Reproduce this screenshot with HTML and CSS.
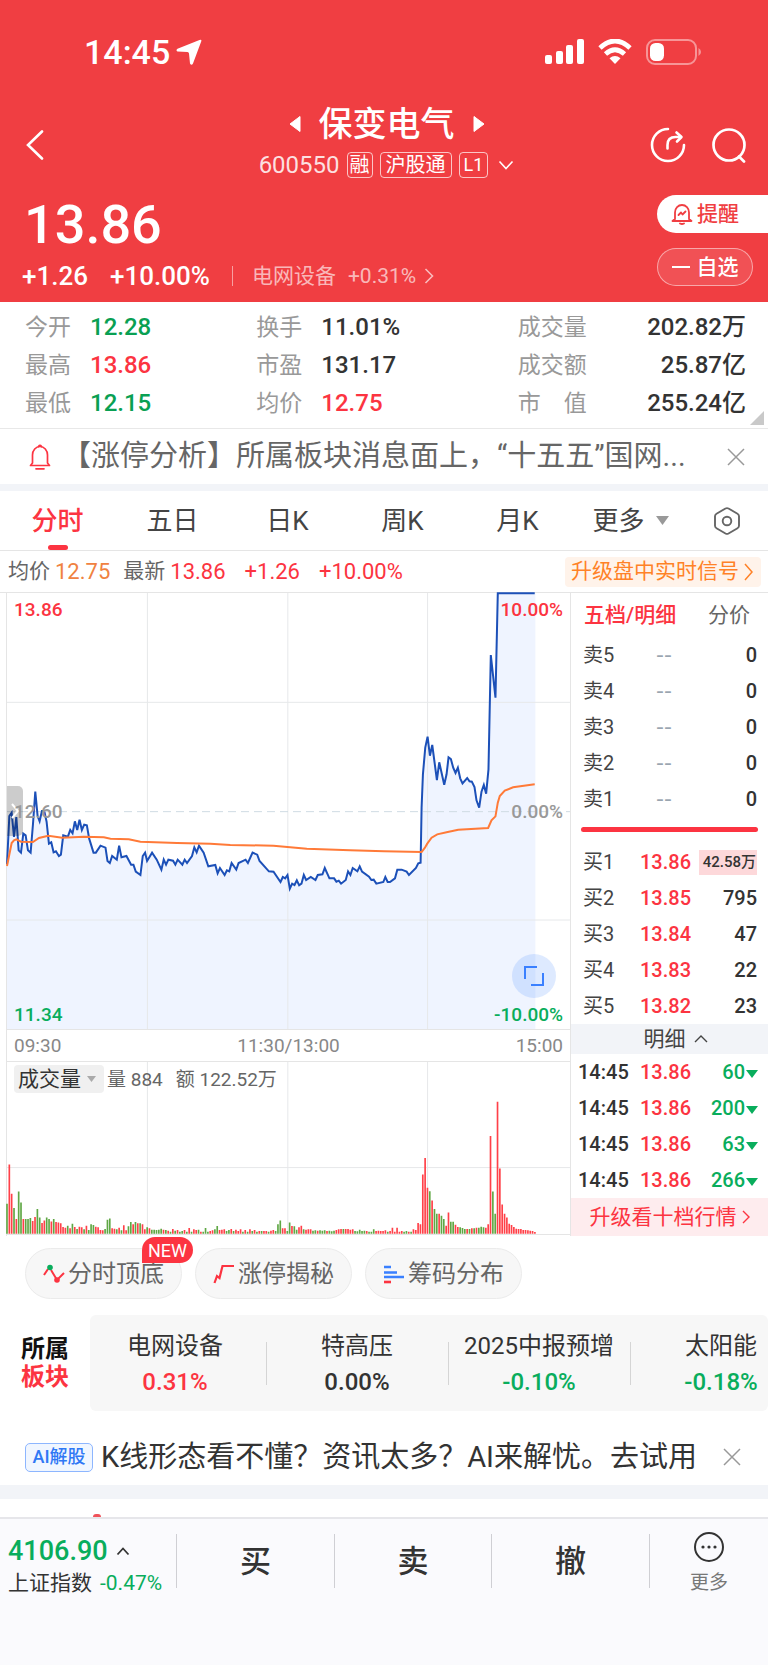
FILE: index.html
```html
<!DOCTYPE html>
<html lang="zh-CN">
<head>
<meta charset="utf-8">
<meta name="viewport" content="width=device-width, initial-scale=1">
<title>保变电气 600550</title>
<link rel="stylesheet" href="styles.css">
</head>
<body>
<header class="hero">
  <div class="status">
    <div class="status-time">14:45
      <svg width="26" height="26" viewBox="0 0 26 26"><path d="M23.500 1Q26 0 25.200 2.500L17 24.500Q15.500 27 14 24.500L13 14.500Q12.800 13.300 11.500 13.100L1.500 12.500Q-.500 11.200 1.500 9.800Z" fill="#fff"/></svg>
    </div>
    <div class="status-icons">
      <svg width="39" height="26" viewBox="0 0 39 26" fill="#fff"><rect x="0" y="16" width="7" height="9" rx="2"/><rect x="11" y="12" width="7" height="13" rx="2"/><rect x="21" y="6" width="7" height="19" rx="2"/><rect x="32" y="0" width="7" height="25" rx="2"/></svg>
      <svg width="34" height="26" viewBox="0 0 34 26" fill="none" stroke="#fff" stroke-width="4.800"><path d="M2 9Q17-5 32 9"/><path d="M7.500 15Q17 6.500 26.500 15"/><path d="M17 25L11.500 19.200Q17 14.800 22.500 19.200Z" fill="#fff" stroke="none"/></svg>
      <svg width="56" height="26" viewBox="0 0 56 26"><rect x="1" y="1" width="49" height="24" rx="8" fill="none" stroke="#fff" stroke-opacity=".45" stroke-width="2"/><rect x="4" y="4" width="14" height="18" rx="5.500" fill="#fff"/><path d="M52.500 9Q55 10.500 55 13T52.500 17Z" fill="#fff" fill-opacity=".45"/></svg>
    </div>
  </div>
  <div class="titlebar">
    <button class="icon-btn back" aria-label="返回"><svg width="18" height="30" viewBox="0 0 18 30"><path d="M16 1.500L2 15L16 28.500" fill="none" stroke="#fff" stroke-width="2.600" stroke-linecap="round"/></svg></button>
    <div class="title-center">
      <div class="title-row">
        <button class="icon-btn" aria-label="上一只"><svg width="12" height="18" viewBox="0 0 12 18"><path d="M11 1.500V16.500L1 9Z" fill="#fff" stroke="#fff" stroke-linejoin="round"/></svg></button>
        <h1>保变电气</h1>
        <button class="icon-btn" aria-label="下一只"><svg width="12" height="18" viewBox="0 0 12 18"><path d="M1 1.500V16.500L11 9Z" fill="#fff" stroke="#fff" stroke-linejoin="round"/></svg></button>
      </div>
      <div class="code-row">
        <span class="code">600550</span><span class="tag">融</span><span class="tag wide">沪股通</span><span class="tag l1">L1</span>
        <svg width="16" height="10" viewBox="0 0 16 10"><path d="M1.500 1.500L8 8.500L14.500 1.500" fill="none" stroke="#fff" stroke-width="1.600"/></svg>
      </div>
    </div>
    <div class="title-actions">
      <button class="icon-btn" aria-label="分享"><svg width="36" height="36" viewBox="0 0 36 36" fill="none" stroke="#fff" stroke-width="2.600" stroke-linecap="round" stroke-linejoin="round"><path d="M18 2A16 16 0 1 0 34 18"/><path d="M17.500 21.500V18Q17.500 10 25.500 10H30.500"/><path d="M26.500 5.500L31.500 10L27 14.500"/></svg></button>
      <button class="icon-btn" aria-label="搜索"><svg width="36" height="36" viewBox="0 0 36 36" fill="none" stroke="#fff" stroke-width="2.700" stroke-linecap="round"><circle cx="18" cy="18" r="15.500"/><path d="M28 29.500L33 34.500"/></svg></button>
    </div>
  </div>
  <div class="quote">
    <div class="quote-main">
      <div class="price">13.86</div>
      <div class="change-row">
        <span class="chg">+1.26</span><span class="chg pct">+10.00%</span>
        <a class="sector-link" href="#">电网设备<span>+0.31%</span><svg width="10" height="16" viewBox="0 0 10 16"><path d="M1.500 1L8.500 8L1.500 15" fill="none" stroke="currentColor" stroke-width="1.600"/></svg></a>
      </div>
    </div>
    <div class="quote-actions">
      <button class="pill solid"><svg width="22" height="22" viewBox="0 0 22 22" fill="none" stroke="#f03e42" stroke-width="1.800" stroke-linejoin="round" stroke-linecap="round"><path d="M4 16V9.500A7 7.500 0 0 1 18 9.500V16L20.500 18H1.500Z"/><path d="M9 20.500Q11 21.500 13 20.500"/><path d="M7.500 12L10 9.500L11.500 11.500L14.500 8.500"/></svg>提醒</button>
      <button class="pill ghost"><svg width="18" height="2" viewBox="0 0 18 2"><path d="M0 1H18" stroke="#fff" stroke-width="2"/></svg>自选</button>
    </div>
  </div>
</header>

<main>
  <section class="stats">
    <dl><dt>今开</dt><dd class="down">12.28</dd><dt>最高</dt><dd class="up">13.86</dd><dt>最低</dt><dd class="down">12.15</dd></dl>
    <dl><dt>换手</dt><dd>11.01%</dd><dt>市盈</dt><dd>131.17</dd><dt>均价</dt><dd class="up">12.75</dd></dl>
    <dl class="right"><dt>成交量</dt><dd>202.82万</dd><dt>成交额</dt><dd>25.87亿</dd><dt>市　值</dt><dd>255.24亿</dd></dl>
    <svg class="corner" width="14" height="14" viewBox="0 0 14 14"><path d="M14 0V14H0Z" fill="#c9c9c9"/></svg>
  </section>

  <section class="news">
    <svg width="22" height="26" viewBox="0 0 22 26" fill="none" stroke="#fc3441" stroke-width="1.700" stroke-linejoin="round" stroke-linecap="round"><path d="M3.500 19V11A7.500 8.500 0 0 1 18.500 11V19L20.500 21.500H1.500Z"/><path d="M9.500 2.500Q11 .300 12.500 2.500M7 24.800H15"/></svg>
    <a class="news-text" href="#">【涨停分析】所属板块消息面上，“十五五”国网...</a>
    <button class="icon-btn" aria-label="关闭"><svg width="18" height="18" viewBox="0 0 18 18"><path d="M1 1L17 17M17 1L1 17" stroke="#999" stroke-width="1.500"/></svg></button>
  </section>

  <nav class="tabs">
    <button class="tab active">分时</button>
    <button class="tab">五日</button>
    <button class="tab">日K</button>
    <button class="tab">周K</button>
    <button class="tab">月K</button>
    <button class="tab">更多<svg width="13" height="9" viewBox="0 0 13 9"><path d="M0 0H13L6.500 9Z" fill="#999"/></svg></button>
    <button class="tab" aria-label="设置"><svg width="28" height="28" viewBox="0 0 28 28" fill="none" stroke="#666" stroke-width="1.900" stroke-linejoin="round"><path d="M12.500 1.500Q14 .700 15.500 1.500L24.500 6.800Q26 7.700 26 9.200V18.800Q26 20.300 24.500 21.200L15.500 26.500Q14 27.300 12.500 26.500L3.500 21.200Q2 20.300 2 18.800V9.200Q2 7.700 3.500 6.800Z"/><circle cx="14" cy="14" r="4.300"/></svg></button>
  </nav>

  <div class="info">
    <span class="lbl">均价</span><span class="avg">12.75</span>
    <span class="lbl second">最新</span><span class="up">13.86</span>
    <span class="up gap">+1.26</span><span class="up gap">+10.00%</span>
    <button class="signal">升级盘中实时信号<svg width="9" height="18" viewBox="0 0 9 18"><path d="M1 1L8 9L1 17" fill="none" stroke="currentColor" stroke-width="1.500"/></svg></button>
  </div>

  <section class="board">
    <div class="charts">
      <div class="chart-box price-chart">
        <svg class="plot" viewBox="19 36 1692 1308" preserveAspectRatio="none">
          <path class="area" d="M19 1344V850L26 705L33 695L40 768L47 708L54 808L61 815L68 758L75 763L82 808L90 815L97 730L104 632L111 705L117 721L124 690L131 690L138 722L145 788L152 784L159 814L166 811L175 825L181 821L188 763L202 767L209 747L216 757L223 721L230 747L237 716L244 747L251 731L259 733L266 773L279 815L286 815L300 794L315 800L321 840L328 846L335 825L349 836L356 794L363 829L378 825L392 851L399 851L406 872L420 882L427 825L434 815L440 840L455 815L469 836L483 866L490 836L497 851L504 836L518 839L525 851L532 836L546 851L553 836L560 846L575 825L582 799L589 814L596 794L610 815L624 856L645 852L652 877L659 861L673 882L680 868L687 871L694 846L708 866L715 846L736 836L743 846L757 815L771 821L778 840L806 871L820 872L841 903L848 888L855 892L862 882L869 923L876 908L883 912L890 898L897 913L904 908L911 882L918 897L932 888L946 897L953 882L967 880L974 861L988 892L1002 892L1009 902L1016 899L1023 908L1037 897L1044 871L1051 882L1058 861L1072 871L1079 856L1086 872L1107 887L1114 897L1121 896L1129 908L1150 903L1156 888L1163 903L1170 903L1185 892L1192 866L1205 866L1220 872L1227 882L1248 861L1255 847L1262 845L1265 680L1269 580L1276 500L1283 467L1290 524L1297 492L1311 597L1318 544L1333 611L1340 580L1346 529L1353 534L1360 560L1367 576L1374 560L1381 592L1388 607L1402 591L1409 601L1416 602L1424 618L1430 658L1438 680L1445 632L1452 612L1459 638L1466 565L1473 222L1487 350L1494 37L1607 37V1344Z"/>
          <path class="grid" d="M441 36V1344M863 36V1344M1283 36V1344M19 364H1711M19 1017H1711"/>
          <path class="zero" d="M19 692H1711"/>
          <path class="line" d="M19 850L26 705L33 695L40 768L47 708L54 808L61 815L68 758L75 763L82 808L90 815L97 730L104 632L111 705L117 721L124 690L131 690L138 722L145 788L152 784L159 814L166 811L175 825L181 821L188 763L202 767L209 747L216 757L223 721L230 747L237 716L244 747L251 731L259 733L266 773L279 815L286 815L300 794L315 800L321 840L328 846L335 825L349 836L356 794L363 829L378 825L392 851L399 851L406 872L420 882L427 825L434 815L440 840L455 815L469 836L483 866L490 836L497 851L504 836L518 839L525 851L532 836L546 851L553 836L560 846L575 825L582 799L589 814L596 794L610 815L624 856L645 852L652 877L659 861L673 882L680 868L687 871L694 846L708 866L715 846L736 836L743 846L757 815L771 821L778 840L806 871L820 872L841 903L848 888L855 892L862 882L869 923L876 908L883 912L890 898L897 913L904 908L911 882L918 897L932 888L946 897L953 882L967 880L974 861L988 892L1002 892L1009 902L1016 899L1023 908L1037 897L1044 871L1051 882L1058 861L1072 871L1079 856L1086 872L1107 887L1114 897L1121 896L1129 908L1150 903L1156 888L1163 903L1170 903L1185 892L1192 866L1205 866L1220 872L1227 882L1248 861L1255 847L1262 845L1265 680L1269 580L1276 500L1283 467L1290 524L1297 492L1311 597L1318 544L1333 611L1340 580L1346 529L1353 534L1360 560L1367 576L1374 560L1381 592L1388 607L1402 591L1409 601L1416 602L1424 618L1430 658L1438 680L1445 632L1452 612L1459 638L1466 565L1473 222L1487 350L1494 37L1605 37"/>
          <path class="mean" d="M19 855L33 786L40 778L47 775L61 782L97 783L115 771L143 764L185 770L250 767L310 769L330 773L385 775L420 782L530 786L630 788L690 792L820 794L920 803L1050 808L1152 811L1265 813L1275 800L1282 788L1295 770L1312 760L1340 754L1375 746L1465 741L1475 718L1487 706L1494 665L1500 645L1515 629L1540 619L1605 610"/>
        </svg>
        <button class="drawer" aria-label="展开"><svg width="8" height="16" viewBox="0 0 8 16"><path d="M1 1L7 8L1 15" fill="none" stroke="#fff" stroke-width="2"/></svg></button>
        <span class="mark tl up">13.86</span><span class="mark tr up">10.00%</span>
        <span class="mark ml">12.60</span><span class="mark mr">0.00%</span>
        <span class="mark bl down">11.34</span><span class="mark br down">-10.00%</span>
        <button class="expand" aria-label="全屏"><svg width="20" height="20" viewBox="0 0 20 20" fill="none" stroke="#3a80ff" stroke-width="2"><path d="M13 1H1V13M7 19H19V7"/></svg></button>
      </div>
      <div class="axis"><span>09:30</span><span>11:30/13:00</span><span>15:00</span></div>
      <div class="chart-box volume-chart">
        <svg class="plot" viewBox="19 394 1692 518" preserveAspectRatio="none">
          <path class="grid" d="M441 394V912M863 394V912M1283 394V912M19 712H1711"/>
          <g id="bars"></g>
        </svg>
        <div class="volume-head">
          <button class="picker">成交量<svg width="9" height="6" viewBox="0 0 9 6"><path d="M0 0H9L4.500 6Z" fill="#aaa"/></svg></button>
          <span>量 884</span><span class="amount">额 122.52万</span>
        </div>
      </div>
    </div>

    <aside class="orders">
      <div class="orders-head"><button class="on">五档/明细</button><button>分价</button></div>
      <table class="book">
        <tr><td>卖5</td><td class="none">--</td><td>0</td></tr>
        <tr><td>卖4</td><td class="none">--</td><td>0</td></tr>
        <tr><td>卖3</td><td class="none">--</td><td>0</td></tr>
        <tr><td>卖2</td><td class="none">--</td><td>0</td></tr>
        <tr><td>卖1</td><td class="none">--</td><td>0</td></tr>
      </table>
      <div class="ratio"></div>
      <table class="book">
        <tr><td>买1</td><td class="up">13.86</td><td><span class="hot">42.58万</span></td></tr>
        <tr><td>买2</td><td class="up">13.85</td><td>795</td></tr>
        <tr><td>买3</td><td class="up">13.84</td><td>47</td></tr>
        <tr><td>买4</td><td class="up">13.83</td><td>22</td></tr>
        <tr><td>买5</td><td class="up">13.82</td><td>23</td></tr>
      </table>
      <button class="detail-head">明细<svg width="14" height="8" viewBox="0 0 14 8"><path d="M1 7L7 1L13 7" fill="none" stroke="#444" stroke-width="1.400"/></svg></button>
      <table class="book ticks">
        <tr><td>14:45</td><td class="up">13.86</td><td class="down">60<i></i></td></tr>
        <tr><td>14:45</td><td class="up">13.86</td><td class="down">200<i></i></td></tr>
        <tr><td>14:45</td><td class="up">13.86</td><td class="down">63<i></i></td></tr>
        <tr><td>14:45</td><td class="up">13.86</td><td class="down">266<i></i></td></tr>
      </table>
      <button class="upgrade">升级看十档行情<svg width="8" height="14" viewBox="0 0 8 14"><path d="M1 1L7 7L1 13" fill="none" stroke="currentColor" stroke-width="1.400"/></svg></button>
    </aside>
  </section>

  <div class="chips">
    <button class="chip"><svg width="22" height="20" viewBox="0 0 22 20" fill="none" stroke="#fc3441" stroke-width="2"><path d="M1 11L5 5M8 6L14 16L21 9"/><circle cx="7" cy="3.500" r="2.800" fill="#09ad5c" stroke="none"/><circle cx="14" cy="16" r="2.800" fill="#fc3441" stroke="none"/></svg>分时顶底<span class="new">NEW</span></button>
    <button class="chip"><svg width="22" height="20" viewBox="0 0 22 20" fill="none" stroke="#fc3441" stroke-width="2.200"><path d="M1.500 19L4 12L6.500 14L9.500 2H21"/></svg>涨停揭秘</button>
    <button class="chip"><svg width="22" height="20" viewBox="0 0 22 20" stroke-width="2.600"><path d="M1 3H8M1 8.500H14M1 13H21" stroke="#3a80ff"/><path d="M1 18H8" stroke="#fc3441"/></svg>筹码分布</button>
  </div>

  <section class="sectors">
    <h2>所属<br><span class="up">板块</span></h2>
    <div class="sector-list">
      <a href="#">电网设备<b class="up">0.31%</b></a>
      <a href="#">特高压<b>0.00%</b></a>
      <a href="#">2025中报预增<b class="down">-0.10%</b></a>
      <a href="#">太阳能<b class="down">-0.18%</b></a>
    </div>
  </section>

  <section class="ai">
    <span class="ai-tag">AI解股</span>
    <a class="ai-text" href="#">K线形态看不懂？资讯太多？AI来解忧。去试用</a>
    <button class="icon-btn" aria-label="关闭"><svg width="18" height="18" viewBox="0 0 18 18"><path d="M1 1L17 17M17 1L1 17" stroke="#999" stroke-width="1.500"/></svg></button>
  </section>
  <div class="peek"><i></i></div>
</main>

<footer class="bottom">
  <a class="index" href="#">
    <span class="index-val">4106.90<svg width="14" height="9" viewBox="0 0 14 9"><path d="M1.500 7.500L7 1.500L12.500 7.500" fill="none" stroke="#333" stroke-width="1.800"/></svg></span>
    <span class="index-name">上证指数<span class="down">-0.47%</span></span>
  </a>
  <button class="trade">买</button>
  <button class="trade">卖</button>
  <button class="trade">撤</button>
  <button class="more"><svg width="32" height="32" viewBox="0 0 32 32"><circle cx="16" cy="16" r="14" fill="none" stroke="#333" stroke-width="2"/><g fill="#333"><circle cx="10" cy="16" r="1.600"/><circle cx="16" cy="16" r="1.600"/><circle cx="22" cy="16" r="1.600"/></g></svg>更多</button>
</footer>
<script src="bars.js"></script>
</body>
</html>
```

FILE: bars.js
```javascript
// One entry per trading minute: r = up, g = down, then bar height.
const volume = `g90 r208 r120 g77 r44 g127 g94 r44 g44 g44 g47 r38 r50 g74 g49 r32 r40 g49 g44 r37
g44 r35 r34 r31 r20 r18 g24 r16 g30 r20 g14 r21 r19 g13 r24 g11 g28 g26 r21 r19
r11 r10 g14 g42 g46 r16 r15 g13 r18 g10 r25 r10 g22 g35 r28 g35 r31 g31 r28 r13
g19 r16 g12 g12 g11 g12 g15 r12 g11 r9 g6 r14 g9 r11 g6 g8 r11 g6 r17 g6
r13 r11 g12 r6 g6 g17 g6 r8 r10 g13 g23 r11 r12 r13 g8 g11 r14 g8 r12 r8
r13 g6 r11 g6 r13 g8 r11 g6 r8 g8 r8 r8 g6 r9 r11 g8 g28 g40 r16 r16
g8 g34 r23 g22 g12 r19 r24 g13 r12 r13 r13 g9 g10 r9 g10 g9 g10 r8 g9 g7
g9 r11 r13 r14 g14 r14 r14 r12 r13 g8 g7 g12 g8 g9 r8 g6 g6 g13 r8 r9
r8 r8 r10 g6 r8 r18 r6 r18 r6 r8 g6 g8 r6 g6 r13 r11 r32 r28 r178 r228
r138 g128 r100 g74 g60 r60 g54 g44 r24 r64 g36 g36 r27 r20 g19 g17 g14 r14
g14 r16 g16 r18 g18 g21 g19 r18 r28 r294 g127 g60 r397 r196 r88 r60 r49 r30 r26 r20
r15 r14 r14 r11 r11 r10 r9 r8 r5`.split(/\s+/);

const step = 7.02;
const first = 207;
const shift = first - volume.indexOf("r294");
const draw = (kind) => {
  const path = document.createElementNS("http://www.w3.org/2000/svg", "path");
  path.setAttribute("class", kind === "r" ? "bar-up" : "bar-down");
  path.setAttribute("d", volume.map((v, i) => {
    const minute = i > 200 ? i + shift : i;
    return v[0] === kind ? `M${(19 + minute * step).toFixed(1)} 911v-${v.slice(1)}` : "";
  }).join(""));
  document.getElementById("bars").append(path);
};
draw("r");
draw("g");
```

FILE: styles.css
```css
* { box-sizing: border-box; }
body {
  margin: 0;
  min-height: 100vh;
  display: flex;
  flex-direction: column;
  background: #fff;
  color: #333;
  font-family: Roboto, "Noto Sans CJK SC", sans-serif;
  font-size: 21px;
  line-height: 1;
}
button { margin: 0; padding: 0; border: 0; background: none; color: inherit; font: inherit; white-space: nowrap; }
a { color: inherit; text-decoration: none; }
svg { display: block; flex: none; }
h1, h2, dl, dd { margin: 0; }
table { border-collapse: collapse; }
.up { color: #fc3441; }
.down { color: #09ad5c; }
.icon-btn { display: flex; align-items: center; justify-content: center; }

/* header */
.hero { background: #f03e42; color: #fff; padding: 34px 0 11px; }
.status { display: flex; justify-content: space-between; align-items: center; height: 36px; padding: 0 66px 0 84px; }
.status-time { display: flex; align-items: center; gap: 6px; font-size: 34px; font-weight: 500; }
.status-icons { display: flex; gap: 14px; }
.titlebar { display: grid; grid-template-columns: 1fr auto 1fr; align-items: center; margin-top: 36px; padding: 0 21px 0 26px; }
.back { justify-self: start; padding-top: 6px; }
.title-center { display: flex; flex-direction: column; align-items: center; gap: 10px; }
.title-row { display: flex; align-items: center; gap: 18px; height: 36px; }
.title-row h1 { font-size: 34px; font-weight: 500; }
.code-row { display: flex; align-items: center; gap: 7px; height: 26px; }
.code { font-size: 24px; color: rgba(255, 255, 255, .85); }
.code-row svg { margin-left: 3px; }
.tag { height: 26px; padding: 0 2px; border: 1px solid rgba(255, 255, 255, .7); border-radius: 4px; font-size: 20px; line-height: 24px; }
.tag.wide { padding: 0 5px; }
.tag.l1 { padding: 0 4px; font-size: 18px; }
.title-actions { display: flex; justify-content: flex-end; gap: 25px; padding-top: 6px; }
.quote { display: flex; justify-content: space-between; margin-top: 16px; }
.quote-main { padding-left: 22px; }
.price { padding-left: 2px; font-size: 54px; font-weight: 500; line-height: 62px; }
.change-row { display: flex; align-items: center; height: 30px; margin-top: 5px; }
.chg { font-size: 26px; font-weight: 500; }
.chg.pct { margin-left: 22px; }
.sector-link { display: flex; align-items: center; margin-left: 22px; padding-left: 19px; border-left: 1px solid rgba(255, 255, 255, .5); height: 20px; color: rgba(255, 255, 255, .65); }
.sector-link span { margin: 0 8px 0 12px; }
.quote-actions { display: flex; flex-direction: column; align-items: flex-end; gap: 15px; padding-top: 1px; }
.pill { display: flex; align-items: center; height: 38px; font-weight: 500; }
.pill.solid { width: 111px; padding-left: 14px; gap: 4px; border-radius: 19px 0 0 19px; background: #fff; color: #f03e42; }
.pill.ghost { width: 96px; justify-content: center; gap: 7px; margin-right: 15px; border: 1px solid rgba(255, 255, 255, .5); border-radius: 19px; background: rgba(255, 255, 255, .1); }

/* key figures */
.stats { position: relative; display: grid; grid-template-columns: 231fr 261fr 228fr; padding: 6px 22px 6px 25px; border-bottom: 1px solid #e8e8e8; }
.stats dl { display: grid; grid-template-columns: 65px 1fr; grid-auto-rows: 38px; align-items: center; }
.stats .right { grid-template-columns: 80px 1fr; }
.stats .right dd { text-align: right; }
.stats dt { font-size: 23px; color: #999; }
.stats dd { font-size: 24px; font-weight: 500; }
.stats .down { color: #09a053; }
.corner { position: absolute; right: 4px; bottom: 3px; }

.news { display: flex; align-items: center; height: 55px; padding: 0 23px 0 29px; }
.news-text { flex: 1; margin-left: 11px; font-size: 29px; color: #666; white-space: nowrap; }

/* period tabs */
.tabs { display: grid; grid-template-columns: repeat(5, 115fr) 111fr 82fr; height: 67px; border-top: 7px solid #f2f4f8; border-bottom: 1px solid #e5e5e5; }
.tab { position: relative; display: flex; align-items: center; justify-content: center; gap: 11px; font-size: 26px; color: #444; }
.tab.active { color: #fc3441; font-weight: 500; }
.tab.active::after { content: ""; position: absolute; bottom: 0; left: 50%; width: 20px; height: 5px; margin-left: -10px; border-radius: 3px; background: #fc3441; }

.info { display: flex; align-items: center; height: 41px; padding: 0 7px 0 8px; font-size: 22px; }
.info .lbl { margin-right: 5px; font-size: 21px; color: #666; }
.info .second { margin-left: 13px; }
.info .avg { color: #f08241; }
.info .gap { margin-left: 19px; }
.signal { display: flex; align-items: center; gap: 5px; height: 30px; margin-left: auto; padding: 0 8px 0 6px; border-radius: 4px; background: #fff3ea; color: #ff8227; font-size: 21px; }

/* charts and order book */
.board { display: flex; border-top: 1px solid #e5e5e5; }
.charts { flex: 1; min-width: 0; margin-left: 6px; border: solid #e5e5e5; border-width: 0 1px; }
.chart-box { position: relative; }
.plot { width: 100%; height: 100%; overflow: visible; }
.price-chart { height: 436px; }
.volume-chart { height: 173px; border-bottom: 1px solid #e5e5e5; }
.grid, .zero, .line, .mean { fill: none; vector-effect: non-scaling-stroke; }
.grid { stroke: #e6e8ea; }
.zero { stroke: #cfdbe3; stroke-dasharray: 8 5; }
.line { stroke: #1c50b8; stroke-width: 2px; }
.mean { stroke: #ff7a38; stroke-width: 2px; }
.area { fill: #eff4ff; }
.bar-up, .bar-down { fill: none; stroke-width: 5; }
.bar-up { stroke: #ff4048; }
.bar-down { stroke: #5fa744; }
.mark { position: absolute; font-size: 19px; font-weight: 500; }
.tl, .ml, .bl { left: 7px; }
.tr, .mr, .br { right: 7px; }
.tl, .tr { top: 7px; }
.ml, .mr { top: 209px; color: #999; }
.bl, .br { bottom: 5px; }
.drawer { position: absolute; left: 0; top: 193px; display: flex; align-items: center; justify-content: center; width: 16px; height: 50px; border-radius: 0 5px 5px 0; background: rgba(0, 0, 0, .2); }
.expand { position: absolute; right: 14px; bottom: 31px; display: flex; align-items: center; justify-content: center; width: 44px; height: 44px; border-radius: 50%; background: rgba(58, 128, 255, .17); }
.axis { display: flex; justify-content: space-between; align-items: center; height: 33px; padding: 0 7px; border: solid #e5e5e5; border-width: 1px 0; font-size: 19px; color: #888; }
.volume-head { position: absolute; left: 7px; top: 3px; display: flex; align-items: center; font-size: 19px; color: #666; }
.picker { display: flex; align-items: center; gap: 6px; height: 28px; margin-right: 3px; padding: 0 8px 0 4px; border-radius: 4px; background: #f0f0f0; color: #333; font-size: 21px; }
.amount { margin-left: 13px; }

.orders { width: 197px; display: flex; flex-direction: column; }
.orders-head { display: flex; justify-content: space-between; align-items: center; height: 44px; padding: 0 18px 0 13px; color: #666; }
.orders-head .on { color: #fc3441; font-weight: 500; }
.book { width: 100%; table-layout: fixed; font-size: 20px; }
.book td { height: 36px; padding: 0; vertical-align: middle; color: #444; white-space: nowrap; }
.book td:first-child { width: 69px; padding-left: 12px; }
.book td:nth-child(2) { width: 52px; }
.book td:last-child { padding-right: 11px; text-align: right; color: #333; font-weight: 500; }
.book td.up { color: #fc3441; font-weight: 500; }
.book td.none { padding-left: 16px; color: #9aa5b0; font-family: "DejaVu Sans", sans-serif; font-size: 22px; }
.book .hot { display: inline-block; padding: 5px 1px 5px 4px; background: #fdd8da; font-size: 15px; }
.ticks td:first-child { padding-left: 7px; color: #333; font-weight: 500; }
.ticks td.down:last-child { padding-right: 10px; color: #09ad5c; }
.ticks i { display: inline-block; margin-left: 1px; border: 6px solid transparent; border-top: 8px solid #09ad5c; border-bottom: 0; vertical-align: 1px; }
.ratio { height: 5px; margin: 10px 10px 12px; border-radius: 3px; background: #fc3441; }
.detail-head, .upgrade { display: flex; align-items: center; justify-content: center; gap: 8px; }
.detail-head { height: 30px; padding-left: 12px; background: #f2f4f8; color: #444; }
.upgrade { height: 38px; gap: 5px; background: #feecee; color: #fc3441; }

/* shortcuts */
.chips { display: flex; gap: 13px; padding: 12px 25px 0; }
.chip { position: relative; display: flex; align-items: center; justify-content: center; gap: 3px; width: 157px; height: 51px; border: 1px solid #ebebeb; border-radius: 26px; background: #f7f7f7; color: #666; font-size: 24px; }
.new { position: absolute; right: -12px; top: -12px; width: 51px; height: 26px; border-radius: 13px 13px 13px 0; background: #fc3441; color: #fff; font-size: 18px; line-height: 27px; text-align: center; }

.sectors { display: flex; align-items: center; margin-top: 16px; }
.sectors h2 { width: 90px; padding-left: 21px; font-size: 24px; font-weight: 700; line-height: 28px; color: #111; }
.sector-list { flex: 1; min-width: 0; display: flex; height: 96px; overflow: hidden; border-radius: 6px; background: #f7f7f7; }
.sector-list a { position: relative; flex: none; width: 182px; display: flex; flex-direction: column; align-items: center; justify-content: center; gap: 12px; margin-left: -6px; margin-right: 6px; padding-top: 2px; font-size: 24px; white-space: nowrap; }
.sector-list a + a::before { content: ""; position: absolute; left: 0; top: 27px; height: 43px; border-left: 1px solid #d5d5d5; }
.sector-list b { font-weight: 500; }

.ai { display: flex; align-items: center; height: 74px; padding: 18px 27px 0 25px; }
.ai-tag { display: flex; align-items: center; justify-content: center; width: 68px; height: 29px; border: 1px solid #8db6ff; border-radius: 5px; background: #f0f6ff; color: #2f78f5; font-size: 18px; font-weight: 500; }
.ai-text { flex: 1; margin-left: 8px; font-size: 29px; white-space: nowrap; }
.peek { display: flex; align-items: flex-end; height: 32px; padding-left: 93px; border-top: 14px solid #f2f4f8; }
.peek i { width: 8px; height: 3px; border-radius: 4px 4px 0 0; background: #f0525a; }

/* trading bar */
.bottom { flex: 1; display: grid; grid-template-columns: 176fr 158fr 157fr 158fr 119fr; grid-template-rows: 54px; padding: 15px 0 78px; border-top: 2px solid #e6e6ea; background: #fafafd; }
.index { display: flex; flex-direction: column; justify-content: center; gap: 8px; padding: 10px 0 0 8px; white-space: nowrap; }
.index-val { display: flex; align-items: center; gap: 8px; color: #09ad5c; font-size: 27px; font-weight: 500; }
.index-name .down { margin-left: 8px; }
.trade { border-left: 1px solid #cfcfd4; color: #333; font-size: 31px; font-weight: 500; }
.more { display: flex; flex-direction: column; align-items: center; justify-content: center; gap: 10px; border-left: 1px solid #cfcfd4; color: #777; font-size: 19px; }
```
